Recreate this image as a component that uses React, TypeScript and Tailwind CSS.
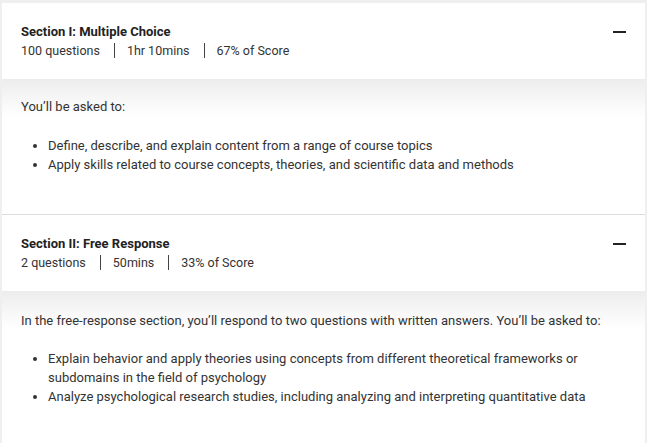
import React from "react";

function Minus() {
  return <div className="w-[13px] h-[2px] bg-[#222]" />;
}

function Header({ title, items }: { title: string; items: string[] }) {
  return (
    <div className="flex justify-between items-start bg-white pl-[19px] pr-[19px] pt-[19px] pb-[19px]">
      <div>
        <div className="text-[13px] leading-[19px] font-bold text-[#222]">{title}</div>
        <div className="flex items-center text-[12.5px] leading-[19px] text-[#333]">
          {items.map((it, i) => (
            <React.Fragment key={i}>
              {i > 0 && <span className="w-px h-[15px] bg-[#444] ml-[14px] mr-[12px]" />}
              <span>{it}</span>
            </React.Fragment>
          ))}
        </div>
      </div>
      <div className="pt-[9px]">
        <Minus />
      </div>
    </div>
  );
}

export default function App() {
  return (
    <div className="min-h-[443px] bg-[#efefef] pt-[3px] px-[2px] font-['Roboto',sans-serif]">
      <div className="bg-white">
        <Header title="Section I: Multiple Choice" items={["100 questions", "1hr 10mins", "67% of Score"]} />
        <div className="bg-[linear-gradient(to_bottom,#ededed_0px,#ffffff_38px)] pl-[19px] pr-[19px] pt-[18px] pb-[40px] text-[13px] leading-[19px] text-[#333]">
          <p>You’ll be asked to:</p>
          <ul className="list-disc pl-[27px] mt-[20px]">
            <li>Define, describe, and explain content from a range of course topics</li>
            <li>Apply skills related to course concepts, theories, and scientific data and methods</li>
          </ul>
        </div>
        <div className="h-px bg-[#dcdcdc]" />
        <Header title="Section II: Free Response" items={["2 questions", "50mins", "33% of Score"]} />
        <div className="bg-[linear-gradient(to_bottom,#ededed_0px,#ffffff_38px)] pl-[19px] pr-[19px] pt-[20px] pb-[40px] text-[13px] leading-[19px] text-[#333]">
          <p>In the free-response section, you’ll respond to two questions with written answers. You’ll be asked to:</p>
          <ul className="list-disc pl-[27px] mt-[19px]">
            <li>Explain behavior and apply theories using concepts from different theoretical frameworks or subdomains in the field of psychology</li>
            <li>Analyze psychological research studies, including analyzing and interpreting quantitative data</li>
          </ul>
        </div>
      </div>
    </div>
  );
}
